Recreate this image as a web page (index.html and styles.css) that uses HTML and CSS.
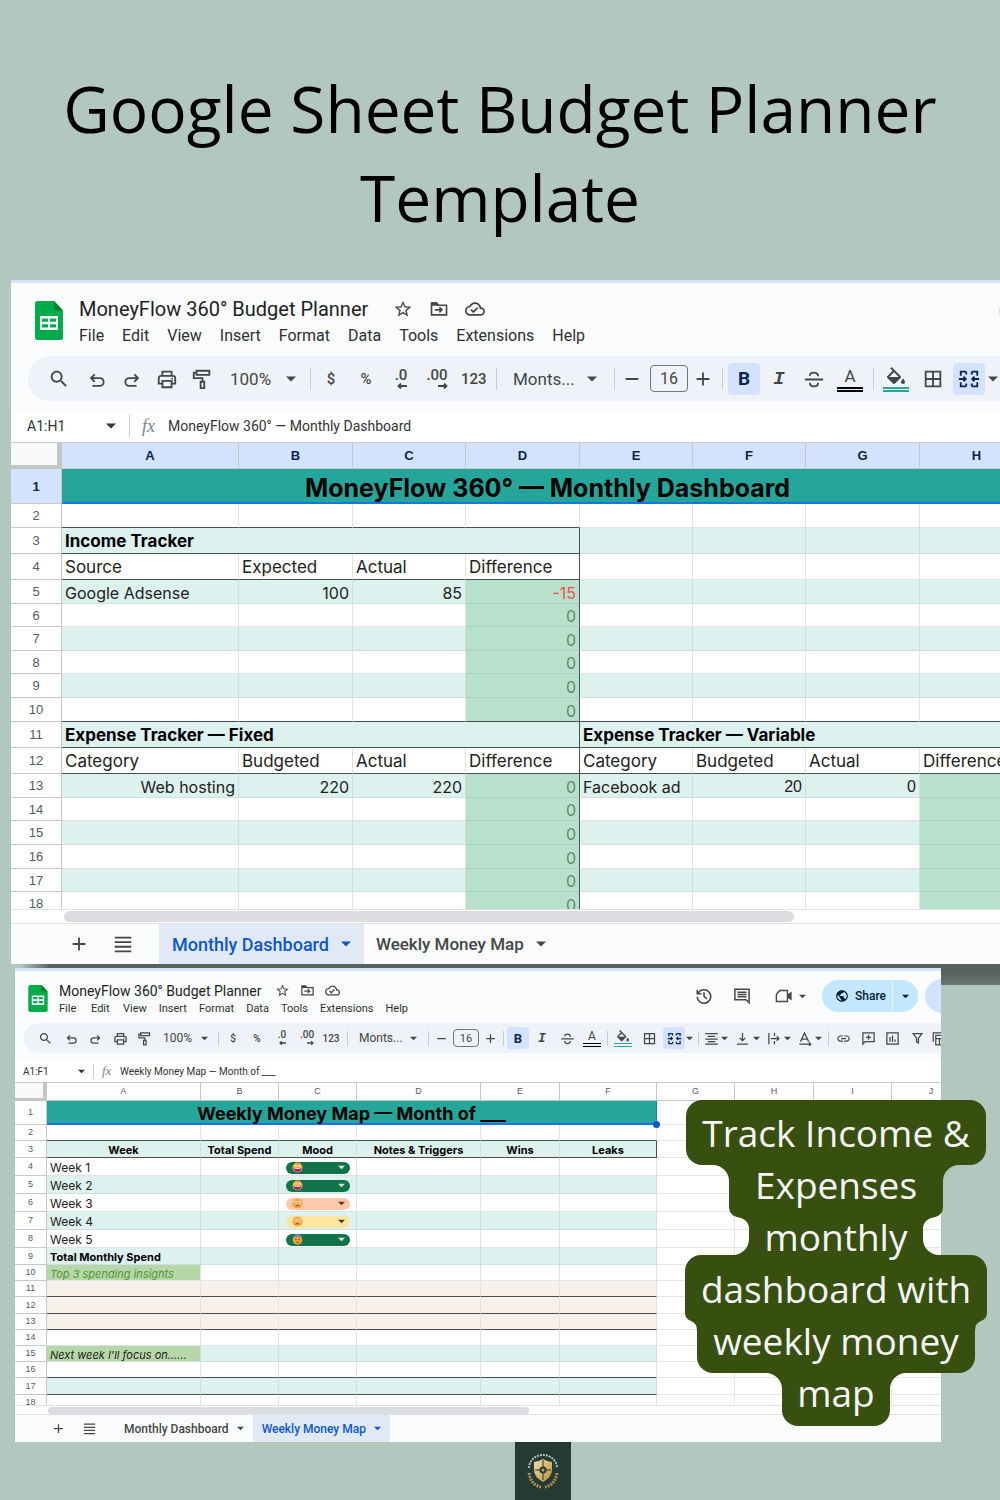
FILE: index.html
```html
<!DOCTYPE html>
<html lang="en">
<head>
<meta charset="utf-8">
<meta name="viewport" content="width=device-width, initial-scale=1">
<title>Google Sheet Budget Planner Template</title>
<link rel="stylesheet" href="styles.css">
</head>
<body>
<svg class="sprite" aria-hidden="true">
  <symbol id="sheets" viewBox="0 0 28 39"><path fill="#00ac47" d="M3 0h16l9 9.500v27a2.500 2.500 0 0 1-2.500 2.500h-23A2.500 2.500 0 0 1 0 36.500V3a3 3 0 0 1 3-3z"/><path fill="#00832d" d="M19 0l9 9.500h-7a2 2 0 0 1-2-2z"/><path fill="#fff" fill-rule="evenodd" d="M5 15h18v14H5zM7 17.500v3.200h6v-3.200zM15 17.500v3.200h6v-3.200zM7 23.200v3.300h6v-3.300zM15 23.200v3.300h6v-3.300z"/></symbol>
  <symbol id="star" viewBox="0 0 24 24"><path d="M22 9.240l-7.190-.62L12 2 9.190 8.630 2 9.240l5.460 4.730L5.820 21 12 17.270 18.180 21l-1.630-7.030L22 9.240zM12 15.400l-3.760 2.270 1-4.280-3.320-2.880 4.380-.38L12 6.100l1.710 4.040 4.380.38-3.320 2.880 1 4.280L12 15.400z"/></symbol>
  <symbol id="move" viewBox="0 0 24 24"><path class="ln" d="M3 5h6l2 2.500h10V19H3zM7 13h8M12.500 10l3 3-3 3"/><path d="M3 4h6l3 3v1H3z"/></symbol>
  <symbol id="cloud" viewBox="0 0 24 24"><path d="M19.350 10.040C18.670 6.590 15.640 4 12 4 9.110 4 6.610 5.640 5.360 8.040 2.350 8.360 0 10.900 0 14c0 3.310 2.690 6 6 6h13c2.760 0 5-2.240 5-5 0-2.640-2.050-4.780-4.650-4.960zM19 18H6c-2.210 0-4-1.790-4-4 0-2.050 1.530-3.760 3.560-3.970l1.070-.11.5-.95C8.080 7.140 9.940 6 12 6c2.620 0 4.880 1.860 5.390 4.430l.3 1.500 1.530.11c1.560.1 2.780 1.410 2.780 2.960 0 1.650-1.350 3-3 3zm-9-3.820l-2.090-2.090L6.500 13.500 10 17l6.010-6.010-1.410-1.410z"/></symbol>
  <symbol id="search" viewBox="0 0 24 24"><path d="M15.500 14h-.79l-.28-.27C15.410 12.590 16 11.110 16 9.500 16 5.910 13.090 3 9.500 3S3 5.910 3 9.500 5.910 16 9.500 16c1.610 0 3.090-.59 4.230-1.570l.27.28v.79l5 4.990L20.490 19l-4.990-5zm-6 0C7.010 14 5 11.990 5 9.500S7.010 5 9.500 5 14 7.010 14 9.500 11.990 14 9.500 14z"/></symbol>
  <symbol id="undo" viewBox="0 0 24 24"><path class="ln" d="M7 19.500h8a4.200 4.200 0 0 0 0-8.500H6M9.500 7l-4 4 4 4"/></symbol>
  <symbol id="redo" viewBox="0 0 24 24"><path class="ln" d="M17 19.500H9a4.200 4.200 0 0 1 0-8.500h9M14.500 7l4 4-4 4"/></symbol>
  <symbol id="print" viewBox="0 0 24 24"><path class="ln" d="M7 8V4h10v4M7 17H3v-6a2.500 2.500 0 0 1 2.500-2.500h13A2.500 2.500 0 0 1 21 11v6h-4M7 14h10v7H7z"/><circle cx="17.700" cy="11.700" r="1"/></symbol>
  <symbol id="paint" viewBox="0 0 24 24"><path class="ln" d="M6 3h14v4.500H6zM6 5H3v6h9.500v4M10.500 15h4v7h-4z"/></symbol>
  <symbol id="caret" viewBox="0 0 10 10"><path d="M0 2.500h10L5 7.500z"/></symbol>
  <symbol id="left" viewBox="0 0 10 6"><path fill="none" stroke="currentColor" stroke-width="1.800" d="M10 3H1.500M4 .5L1.500 3 4 5.500"/></symbol>
  <symbol id="right" viewBox="0 0 10 6"><path fill="none" stroke="currentColor" stroke-width="1.800" d="M0 3h8.500M6 .5L8.500 3 6 5.500"/></symbol>
  <symbol id="minus" viewBox="0 0 24 24"><path d="M5 11h14v2H5z"/></symbol>
  <symbol id="plus" viewBox="0 0 24 24"><path d="M19 13h-6v6h-2v-6H5v-2h6V5h2v6h6z"/></symbol>
  <symbol id="strike" viewBox="0 0 24 24"><path class="ln" d="M2 12.500h20M16.500 9c0-2.300-1.800-4-4.500-4S7.500 6.500 7.500 8.500M7.500 16c0 2.300 1.800 4 4.500 4s4.500-1.700 4.500-4"/></symbol>
  <symbol id="bucket" viewBox="0 0 24 18"><path fill-rule="evenodd" d="M16.560 8.940L7.620 0 6.210 1.410l2.380 2.380-5.150 5.150c-.59.59-.59 1.540 0 2.120l5.500 5.500c.29.29.68.44 1.060.44s.77-.15 1.060-.44l5.500-5.500c.59-.58.59-1.530 0-2.120zM5.210 10L10 5.210 14.790 10zM19 11.500s-2 2.170-2 3.500c0 1.100.9 2 2 2s2-.9 2-2c0-1.330-2-3.500-2-3.500z"/></symbol>
  <symbol id="borders" viewBox="0 0 24 24"><path class="ln" d="M4 4h16v16H4zM12 4v16M4 12h16"/></symbol>
  <symbol id="merge" viewBox="0 0 24 24"><path class="ln" d="M9 4H3v4.500M3 15.500V20h6M15 4h6v4.500M21 15.500V20h-6M1 12h7M6 9.500L8.500 12 6 14.500M23 12h-7M18 9.500L15.500 12l2.500 2.500M9 4v3M9 20v-3M15 4v3M15 20v-3"/></symbol>
  <symbol id="align" viewBox="0 0 24 24"><path d="M2 3h20v2H2zM6 7.500h12v2H6zM2 12h20v2H2zM6 16h12v2H6zM2 20h20v2H2z"/></symbol>
  <symbol id="valign" viewBox="0 0 24 24"><path class="ln" d="M3 21h18M12 3v12M7.500 11l4.500 4.500 4.500-4.500"/></symbol>
  <symbol id="wrap" viewBox="0 0 24 24"><path class="ln" d="M3 3v18M12 3v5M12 16v5M6 12h13M15.500 8.500L19 12l-3.500 3.500"/></symbol>
  <symbol id="rotate" viewBox="0 0 24 24"><path class="ln" d="M4 17L10.500 3 17 17M6.500 13h8M2 21h18M17.500 18l3 3-3 3"/></symbol>
  <symbol id="link" viewBox="0 0 24 24"><path d="M3.900 12c0-1.710 1.390-3.100 3.100-3.100h4V7H7c-2.760 0-5 2.240-5 5s2.240 5 5 5h4v-1.900H7c-1.710 0-3.100-1.390-3.100-3.100zM8 13h8v-2H8v2zm9-6h-4v1.900h4c1.710 0 3.100 1.390 3.100 3.100s-1.390 3.100-3.100 3.100h-4V17h4c2.760 0 5-2.240 5-5s-2.240-5-5-5z"/></symbol>
  <symbol id="addnote" viewBox="0 0 24 24"><path class="ln" d="M3 21V3h18v14H6.500zM12 6v8M8 10h8"/></symbol>
  <symbol id="chart" viewBox="0 0 24 24"><path class="ln" d="M3 3h18v18H3zM8 9.500V17M12 7v10M16 13.500V17"/></symbol>
  <symbol id="filter" viewBox="0 0 24 24"><path class="ln" d="M5 4h14l-5.500 7.500V19l-3-1.500v-6z"/></symbol>
  <symbol id="views" viewBox="0 0 24 24"><path class="ln" d="M2 17V3h18M6 7h18v15H6zM6 12h18M12 12v10M18 12v10"/></symbol>
  <symbol id="history" viewBox="0 0 24 24"><path class="ln" d="M3 3.500V9h5.500M4 8.500A9 9 0 1 1 3 13M12 7v5.500l4 3.500"/></symbol>
  <symbol id="comment" viewBox="0 0 24 24"><path class="ln" d="M2.500 3h19v18l-4-4h-15zM6 7h12M6 10h12M6 13h12"/></symbol>
  <symbol id="video" viewBox="0 0 26 24"><path class="ln" d="M2 9.500L7 4h11v16H2z"/><path d="M18 10l6-4.500v13L18 14z"/></symbol>
  <symbol id="globe" viewBox="0 0 24 24"><path d="M12 2C6.480 2 2 6.480 2 12s4.480 10 10 10 10-4.480 10-10S17.520 2 12 2zm-1 17.930c-3.950-.49-7-3.850-7-7.930 0-.62.08-1.210.21-1.790L9 15v1c0 1.100.9 2 2 2v1.930zm6.900-2.540c-.26-.81-1-1.390-1.900-1.390h-1v-3c0-.55-.45-1-1-1H8v-2h2c.55 0 1-.45 1-1V7h2c1.100 0 2-.9 2-2v-.41c2.930 1.190 5 4.060 5 7.410 0 2.080-.8 3.970-2.100 5.390z"/></symbol>
  <symbol id="menu" viewBox="0 0 24 24"><path d="M3 4h18v2H3zM3 9h18v2H3zM3 14h18v2H3zM3 19h18v2H3z"/></symbol>
  <symbol id="grin" viewBox="0 0 12 12"><circle cx="6" cy="6" r="5.500" fill="#f7a531"/><circle cx="4" cy="4.300" r="1.400" fill="#fff"/><circle cx="8" cy="4.300" r="1.400" fill="#fff"/><circle cx="4.200" cy="4.400" r=".6" fill="#47302a"/><circle cx="7.800" cy="4.400" r=".6" fill="#47302a"/><path fill="#b3127c" d="M2 6.500h8a4 4 0 0 1-8 0z"/><path fill="#fff" d="M3 6.500h6v1H3z"/></symbol>
  <symbol id="frown" viewBox="0 0 12 12"><circle cx="6" cy="6" r="5.500" fill="#f9a83c"/><circle cx="4" cy="4.800" r="1.400" fill="#fff"/><circle cx="8" cy="4.800" r="1.400" fill="#fff"/><circle cx="4.200" cy="5" r=".6" fill="#47302a"/><circle cx="7.800" cy="5" r=".6" fill="#47302a"/><path fill="none" stroke="#6b3320" d="M4 9q2-2 4 0"/></symbol>
  <symbol id="angel" viewBox="0 0 12 12"><circle cx="6" cy="6.500" r="5.200" fill="#f7a531"/><ellipse cx="6" cy="1.800" rx="4.500" ry="1.200" fill="none" stroke="#5b7fe8"/><path fill="none" stroke="#6b3320" d="M3 6q1-1 2 0M7 6q1-1 2 0M4 8.500q2 2 4 0"/></symbol>
</svg>

<main class="page">
  <h1 class="headline">Google Sheet Budget Planner Template</h1>

  <section class="sheet sheet-lg" aria-label="Monthly Dashboard sheet">
    <header class="top">
      <svg class="logo"><use href="#sheets"/></svg>
      <div class="doc">
        <div class="name-row"><h2 class="name">MoneyFlow 360° Budget Planner</h2><svg class="icon"><use href="#star"/></svg><svg class="icon"><use href="#move"/></svg><svg class="icon"><use href="#cloud"/></svg></div>
        <nav class="menus"><a href="#">File</a><a href="#">Edit</a><a href="#">View</a><a href="#">Insert</a><a href="#">Format</a><a href="#">Data</a><a href="#">Tools</a><a href="#">Extensions</a><a href="#">Help</a></nav>
      </div>
      <div class="actions"><svg class="icon"><use href="#history"/></svg></div>
    </header>
    <div class="toolbar">
      <button aria-label="Search the menus"><svg class="icon"><use href="#search"/></svg></button>
      <button aria-label="Undo"><svg class="icon"><use href="#undo"/></svg></button>
      <button aria-label="Redo"><svg class="icon"><use href="#redo"/></svg></button>
      <button aria-label="Print"><svg class="icon"><use href="#print"/></svg></button>
      <button aria-label="Paint format"><svg class="icon"><use href="#paint"/></svg></button>
      <select class="pick" aria-label="Zoom"><option>100%</option></select>
      <svg class="caret"><use href="#caret"/></svg>
      <i class="sep"></i>
      <button class="fmt" aria-label="Currency">$</button>
      <button class="fmt" aria-label="Percent">%</button>
      <button class="fmt dec" aria-label="Fewer decimals">.0<svg class="tiny"><use href="#left"/></svg></button>
      <button class="fmt dec" aria-label="More decimals">.00<svg class="tiny"><use href="#right"/></svg></button>
      <button class="fmt num" aria-label="More formats">123</button>
      <i class="sep"></i>
      <select class="pick" aria-label="Font"><option>Monts...</option></select>
      <svg class="caret"><use href="#caret"/></svg>
      <i class="sep"></i>
      <button aria-label="Smaller"><svg class="icon"><use href="#minus"/></svg></button>
      <input class="size" aria-label="Font size" value="16">
      <button aria-label="Larger"><svg class="icon"><use href="#plus"/></svg></button>
      <i class="sep"></i>
      <button class="on bold" aria-label="Bold">B</button>
      <button class="ital" aria-label="Italic">I</button>
      <button aria-label="Strikethrough"><svg class="icon"><use href="#strike"/></svg></button>
      <button class="ink" aria-label="Text colour">A</button>
      <i class="sep"></i>
      <button class="ink fill" aria-label="Fill colour"><svg class="bucket"><use href="#bucket"/></svg></button>
      <button aria-label="Borders"><svg class="icon"><use href="#borders"/></svg></button>
      <button class="on" aria-label="Merge cells"><svg class="icon"><use href="#merge"/></svg></button>
      <svg class="caret"><use href="#caret"/></svg>
    </div>
    <div class="formula">
      <input class="ref" aria-label="Name box" value="A1:H1"><svg class="caret"><use href="#caret"/></svg><i class="sep"></i><span class="fx">fx</span><input class="expr" aria-label="Formula" value="MoneyFlow 360° — Monthly Dashboard">
    </div>
    <div class="view">
      <table class="grid">
        <colgroup><col class="c51"><col class="c177"><col class="c114"><col class="c113"><col class="c114"><col class="c113"><col class="c113"><col class="c114"><col class="c114"></colgroup>
        <thead><tr><th class="corner"></th><th>A</th><th>B</th><th>C</th><th>D</th><th>E</th><th>F</th><th>G</th><th>H</th></tr></thead>
        <tbody>
        <tr class="banner"><th>1</th><td colspan="8">MoneyFlow 360° — Monthly Dashboard</td></tr>
        <tr class="rule4"><th>2</th><td></td><td></td><td></td><td></td><td></td><td></td><td></td><td></td></tr>
        <tr class="band tall"><th>3</th><td colspan="4" class="strong ub rb">Income Tracker</td><td></td><td></td><td></td><td></td></tr>
        <tr class="tall cap rule4"><th>4</th><td>Source</td><td>Expected</td><td>Actual</td><td class="rb">Difference</td><td></td><td></td><td></td><td></td></tr>
        <tr class="band"><th>5</th><td>Google Adsense</td><td class="n">100</td><td class="n">85</td><td class="diff neg rb">-15</td><td></td><td></td><td></td><td></td></tr>
        <tr class="snug"><th>6</th><td></td><td></td><td></td><td class="diff rb">0</td><td></td><td></td><td></td><td></td></tr>
        <tr class="band"><th>7</th><td></td><td></td><td></td><td class="diff rb">0</td><td></td><td></td><td></td><td></td></tr>
        <tr class="snug"><th>8</th><td></td><td></td><td></td><td class="diff rb">0</td><td></td><td></td><td></td><td></td></tr>
        <tr class="band"><th>9</th><td></td><td></td><td></td><td class="diff rb">0</td><td></td><td></td><td></td><td></td></tr>
        <tr class="rule"><th>10</th><td></td><td></td><td></td><td class="diff rb">0</td><td></td><td></td><td></td><td></td></tr>
        <tr class="band tall rule"><th>11</th><td colspan="4" class="strong rb">Expense Tracker — Fixed</td><td colspan="4" class="strong">Expense Tracker — Variable</td></tr>
        <tr class="tall cap rule"><th>12</th><td>Category</td><td>Budgeted</td><td>Actual</td><td class="rb">Difference</td><td>Category</td><td>Budgeted</td><td>Actual</td><td>Difference</td></tr>
        <tr class="band"><th>13</th><td class="n">Web hosting</td><td class="n">220</td><td class="n">220</td><td class="diff rb">0</td><td>Facebook ad</td><td class="n plain">20</td><td class="n plain">0</td><td class="diff"></td></tr>
        <tr class="snug"><th>14</th><td></td><td></td><td></td><td class="diff rb">0</td><td></td><td></td><td></td><td class="diff"></td></tr>
        <tr class="band"><th>15</th><td></td><td></td><td></td><td class="diff rb">0</td><td></td><td></td><td></td><td class="diff"></td></tr>
        <tr><th>16</th><td></td><td></td><td></td><td class="diff rb">0</td><td></td><td></td><td></td><td class="diff"></td></tr>
        <tr class="band snug"><th>17</th><td></td><td></td><td></td><td class="diff rb">0</td><td></td><td></td><td></td><td class="diff"></td></tr>
        <tr><th>18</th><td></td><td></td><td></td><td class="diff rb">0</td><td></td><td></td><td></td><td class="diff"></td></tr>
        </tbody>
      </table>
    </div>
    <div class="scroll"><i class="thumb"></i></div>
    <footer class="tabs">
      <button aria-label="Add sheet"><svg class="icon"><use href="#plus"/></svg></button>
      <button aria-label="All sheets"><svg class="icon"><use href="#menu"/></svg></button>
      <button class="tab active">Monthly Dashboard<svg class="caret"><use href="#caret"/></svg></button>
      <button class="tab">Weekly Money Map<svg class="caret"><use href="#caret"/></svg></button>
    </footer>
  </section>

  <div class="lower">
  <section class="sheet sheet-sm" aria-label="Weekly Money Map sheet">
    <header class="top">
      <svg class="logo"><use href="#sheets"/></svg>
      <div class="doc">
        <div class="name-row"><h2 class="name">MoneyFlow 360° Budget Planner</h2><svg class="icon"><use href="#star"/></svg><svg class="icon"><use href="#move"/></svg><svg class="icon"><use href="#cloud"/></svg></div>
        <nav class="menus"><a href="#">File</a><a href="#">Edit</a><a href="#">View</a><a href="#">Insert</a><a href="#">Format</a><a href="#">Data</a><a href="#">Tools</a><a href="#">Extensions</a><a href="#">Help</a></nav>
      </div>
      <div class="actions">
        <svg class="icon"><use href="#history"/></svg><svg class="icon"><use href="#comment"/></svg>
        <span class="meet"><svg class="icon"><use href="#video"/></svg><svg class="caret"><use href="#caret"/></svg></span>
        <span class="share"><button><svg class="globe"><use href="#globe"/></svg>Share</button><button aria-label="Share options"><svg class="caret"><use href="#caret"/></svg></button></span>
        <i class="avatar"></i>
      </div>
    </header>
    <div class="toolbar">
      <button aria-label="Search the menus"><svg class="icon"><use href="#search"/></svg></button>
      <button aria-label="Undo"><svg class="icon"><use href="#undo"/></svg></button>
      <button aria-label="Redo"><svg class="icon"><use href="#redo"/></svg></button>
      <button aria-label="Print"><svg class="icon"><use href="#print"/></svg></button>
      <button aria-label="Paint format"><svg class="icon"><use href="#paint"/></svg></button>
      <select class="pick" aria-label="Zoom"><option>100%</option></select>
      <svg class="caret"><use href="#caret"/></svg>
      <i class="sep"></i>
      <button class="fmt" aria-label="Currency">$</button>
      <button class="fmt" aria-label="Percent">%</button>
      <button class="fmt dec" aria-label="Fewer decimals">.0<svg class="tiny"><use href="#left"/></svg></button>
      <button class="fmt dec" aria-label="More decimals">.00<svg class="tiny"><use href="#right"/></svg></button>
      <button class="fmt num" aria-label="More formats">123</button>
      <i class="sep"></i>
      <select class="pick" aria-label="Font"><option>Monts...</option></select>
      <svg class="caret"><use href="#caret"/></svg>
      <i class="sep"></i>
      <button aria-label="Smaller"><svg class="icon"><use href="#minus"/></svg></button>
      <input class="size" aria-label="Font size" value="16">
      <button aria-label="Larger"><svg class="icon"><use href="#plus"/></svg></button>
      <i class="sep"></i>
      <button class="on bold" aria-label="Bold">B</button>
      <button class="ital" aria-label="Italic">I</button>
      <button aria-label="Strikethrough"><svg class="icon"><use href="#strike"/></svg></button>
      <button class="ink" aria-label="Text colour">A</button>
      <i class="sep"></i>
      <button class="ink fill" aria-label="Fill colour"><svg class="bucket"><use href="#bucket"/></svg></button>
      <button aria-label="Borders"><svg class="icon"><use href="#borders"/></svg></button>
      <button class="on" aria-label="Merge cells"><svg class="icon"><use href="#merge"/></svg></button>
      <svg class="caret"><use href="#caret"/></svg>
      <i class="sep"></i>
      <button aria-label="Horizontal align"><svg class="icon"><use href="#align"/></svg></button>
      <svg class="caret"><use href="#caret"/></svg>
      <button aria-label="Vertical align"><svg class="icon"><use href="#valign"/></svg></button>
      <svg class="caret"><use href="#caret"/></svg>
      <button aria-label="Text wrapping"><svg class="icon"><use href="#wrap"/></svg></button>
      <svg class="caret"><use href="#caret"/></svg>
      <button aria-label="Text rotation"><svg class="icon"><use href="#rotate"/></svg></button>
      <svg class="caret"><use href="#caret"/></svg>
      <i class="sep"></i>
      <button aria-label="Insert link"><svg class="icon"><use href="#link"/></svg></button>
      <button aria-label="Insert comment"><svg class="icon"><use href="#addnote"/></svg></button>
      <button aria-label="Insert chart"><svg class="icon"><use href="#chart"/></svg></button>
      <button aria-label="Filter"><svg class="icon"><use href="#filter"/></svg></button>
      <button aria-label="Table views"><svg class="icon"><use href="#views"/></svg></button>
    </div>
    <div class="formula">
      <input class="ref" aria-label="Name box" value="A1:F1"><svg class="caret"><use href="#caret"/></svg><i class="sep"></i><span class="fx">fx</span><input class="expr" aria-label="Formula" value="Weekly Money Map — Month of ___">
    </div>
    <div class="view">
      <table class="grid">
        <colgroup><col class="c32"><col class="c154"><col class="c78"><col class="c78"><col class="c124"><col class="c79"><col class="c97"><col class="c78"><col class="c79"><col class="c78"><col class="c79"></colgroup>
        <thead><tr><th class="corner"></th><th>A</th><th>B</th><th>C</th><th>D</th><th>E</th><th>F</th><th>G</th><th>H</th><th>I</th><th>J</th></tr></thead>
        <tbody>
        <tr class="banner"><th>1</th><td colspan="6">Weekly Money Map — Month of ___<i class="handle"></i></td><td></td><td></td><td></td><td></td></tr>
        <tr class="rule6"><th>2</th><td></td><td></td><td></td><td></td><td></td><td></td><td></td><td></td><td></td><td></td></tr>
        <tr class="band heads rule6"><th>3</th><td>Week</td><td>Total Spend</td><td>Mood</td><td>Notes &amp; Triggers</td><td>Wins</td><td class="rb">Leaks</td><td></td><td></td><td></td><td></td></tr>
        <tr class="week"><th>4</th><td>Week 1</td><td></td><td><span class="chip"><svg><use href="#grin"/></svg><select aria-label="Mood, week 1"><option></option></select><svg class="caret"><use href="#caret"/></svg></span></td><td></td><td></td><td></td><td></td><td></td><td></td><td></td></tr>
        <tr class="band week"><th>5</th><td>Week 2</td><td></td><td><span class="chip"><svg><use href="#grin"/></svg><select aria-label="Mood, week 2"><option></option></select><svg class="caret"><use href="#caret"/></svg></span></td><td></td><td></td><td></td><td></td><td></td><td></td><td></td></tr>
        <tr class="week"><th>6</th><td>Week 3</td><td></td><td><span class="chip peach"><svg><use href="#frown"/></svg><select aria-label="Mood, week 3"><option></option></select><svg class="caret"><use href="#caret"/></svg></span></td><td></td><td></td><td></td><td></td><td></td><td></td><td></td></tr>
        <tr class="band week"><th>7</th><td>Week 4</td><td></td><td><span class="chip yellow"><svg><use href="#frown"/></svg><select aria-label="Mood, week 4"><option></option></select><svg class="caret"><use href="#caret"/></svg></span></td><td></td><td></td><td></td><td></td><td></td><td></td><td></td></tr>
        <tr class="week"><th>8</th><td>Week 5</td><td></td><td><span class="chip"><svg><use href="#angel"/></svg><select aria-label="Mood, week 5"><option></option></select><svg class="caret"><use href="#caret"/></svg></span></td><td></td><td></td><td></td><td></td><td></td><td></td><td></td></tr>
        <tr class="band roomy"><th>9</th><td class="strong">Total Monthly Spend</td><td></td><td></td><td></td><td></td><td></td><td></td><td></td><td></td><td></td></tr>
        <tr><th>10</th><td class="prompt soft">Top 3 spending insights</td><td></td><td></td><td></td><td></td><td></td><td></td><td></td><td></td><td></td></tr>
        <tr class="blush rule6"><th>11</th><td></td><td></td><td></td><td></td><td></td><td></td><td></td><td></td><td></td><td></td></tr>
        <tr class="blush rule6 roomy"><th>12</th><td></td><td></td><td></td><td></td><td></td><td></td><td></td><td></td><td></td><td></td></tr>
        <tr class="blush rule6"><th>13</th><td></td><td></td><td></td><td></td><td></td><td></td><td></td><td></td><td></td><td></td></tr>
        <tr><th>14</th><td></td><td></td><td></td><td></td><td></td><td></td><td></td><td></td><td></td><td></td></tr>
        <tr class="band"><th>15</th><td class="prompt">Next week I'll focus on......</td><td></td><td></td><td></td><td></td><td></td><td></td><td></td><td></td><td></td></tr>
        <tr class="rule6"><th>16</th><td></td><td></td><td></td><td></td><td></td><td></td><td></td><td></td><td></td><td></td></tr>
        <tr class="band rule6 roomy"><th>17</th><td></td><td></td><td></td><td></td><td></td><td></td><td></td><td></td><td></td><td></td></tr>
        <tr><th>18</th><td></td><td></td><td></td><td></td><td></td><td></td><td></td><td></td><td></td><td></td></tr>
        </tbody>
      </table>
    </div>
    <div class="scroll"><i class="thumb"></i></div>
    <footer class="tabs">
      <button aria-label="Add sheet"><svg class="icon"><use href="#plus"/></svg></button>
      <button aria-label="All sheets"><svg class="icon"><use href="#menu"/></svg></button>
      <button class="tab">Monthly Dashboard<svg class="caret"><use href="#caret"/></svg></button>
      <button class="tab active">Weekly Money Map<svg class="caret"><use href="#caret"/></svg></button>
    </footer>
  </section>
  <aside class="callout">
    <svg class="blob" viewBox="0 0 302 326" aria-hidden="true"><path fill="#375010" d="M17 0H285a16 16 0 0 1 16 16V49a16 16 0 0 1-16 16H274a16 16 0 0 0-16 16V107a10 10 0 0 1-8 10q-12 2-12 12V139a16 16 0 0 0 16 16H286a16 16 0 0 1 16 16V212a9 9 0 0 1-6 9q-6 2-6 10V257a16 16 0 0 1-16 16H221a16 16 0 0 0-16 16V310a16 16 0 0 1-16 16H113a16 16 0 0 1-16-16V289a16 16 0 0 0-16-16H28a16 16 0 0 1-16-16V231q0-8-6-10a9 9 0 0 1-6-9V171a16 16 0 0 1 16-16H48a16 16 0 0 0 16-16V129q0-10-12-12a10 10 0 0 1-8-10V81a16 16 0 0 0-16-16H17a16 16 0 0 1-16-16V16a16 16 0 0 1 16-16z"/></svg>
    <p>Track Income &amp;<br>Expenses<br>monthly<br>dashboard with<br>weekly money<br>map</p>
  </aside>
  </div>

  <footer class="brand">
    <svg viewBox="0 0 56 58" role="img" aria-label="Brand crest">
      <defs><linearGradient id="gold" x1="0" y1="0" x2="1" y2="1"><stop offset="0" stop-color="#f3e0a0"/><stop offset="1" stop-color="#b98d3f"/></linearGradient></defs>
      <path fill="url(#gold)" d="M28 17q5 3 9 3v8q0 7-9 12-9-5-9-12v-8q4 0 9-3z"/>
      <path stroke="#233a35" fill="none" d="M28 18v20M20 28h16"/><circle cx="28" cy="28" r="3.500" fill="#233a35"/><circle cx="28" cy="28" r="1.500" fill="#c9a55a"/>
      <path fill="none" stroke="#d9e0d8" stroke-width="2" stroke-dasharray="2 1" opacity=".8" d="M14 26a14 13 0 0 1 28 0"/>
      <path fill="none" stroke="#b08f4e" stroke-width="3" stroke-dasharray="2 1" d="M14 31q2 12 12 14M42 31q-2 12-12 14"/>
    </svg>
  </footer>
</main>
</body>
</html>
```
FILE: styles.css
```css
* { box-sizing: border-box; }

body {
  margin: 0;
  background: #b2c7be;
  font-family: Roboto, "Liberation Sans", sans-serif;
  color: #444746;
}

.sprite { display: none; }
.page { overflow: hidden; }

button, input, select {
  appearance: none;
  margin: 0;
  padding: 0;
  border: 0;
  background: none;
  font: inherit;
  color: inherit;
}

svg { display: block; flex: none; fill: currentColor; }
.ln { fill: none; stroke: currentColor; stroke-width: 2; }

.headline {
  max-width: 900px;
  margin: 0 auto;
  padding: 64px 0 38px;
  font: 400 64px/89px "Open Sans", "Noto Sans", sans-serif;
  color: #000;
  text-align: center;
}

/* Spreadsheet window */
.sheet {
  border-top: 3px solid #d3e3fd;
  background: #f9fbfd;
}

.top, .name-row, .menus, .actions, .formula, .tabs, .tab, .meet, .share, .share button {
  display: flex;
  align-items: center;
}

.top { align-items: flex-start; }
.name { margin: 0; font-weight: 400; color: #1f1f1f; }
.menus a { color: #30312f; text-decoration: none; }
.actions { margin-left: auto; }

.toolbar {
  display: grid;
  align-items: center;
  background: #eff2f8;
  overflow: hidden;
}

.toolbar button {
  display: grid;
  place-items: center;
  width: var(--cell);
  height: var(--key);
}

.icon { width: var(--icon); height: var(--icon); }
.caret { width: var(--caret); height: var(--caret); }
.sep { width: 1px; height: var(--icon); background: #c9ccd1; }
.toolbar .on { width: var(--key); background: #d3e3fd; border-radius: 4px; color: #0b2452; }
.toolbar .bold { font-weight: 700; font-size: var(--glyph); }
.toolbar .ital { font: italic 700 var(--glyph) "Liberation Mono", monospace; }
.toolbar .ink {
  height: var(--ink);
  width: var(--wide);
  border-bottom: 5px double #000;
  font-size: var(--label);
  line-height: 1;
}
.toolbar .fill { border-color: #26a69a; }
.fmt { font-weight: 500; font-size: var(--small); white-space: nowrap; }
.toolbar .dec { place-content: center; line-height: 1; }
.tiny { width: var(--caret); height: 6px; justify-self: end; }
.pick { font-size: var(--label); }
.size { border: 1px solid #747775; border-radius: 4px; text-align: center; }

.formula { background: #fff; color: #333; }
.expr { flex: 1; }
.fx { font: italic 400 18px "Liberation Serif", serif; color: #80868b; }

.view { overflow: hidden; background: #fff; }

.grid {
  table-layout: fixed;
  width: 0;
  border-spacing: 0;
  font-family: Inter, "Open Sans", sans-serif;
  color: #222;
}

.grid th, .grid td {
  padding: 0 3px;
  border-right: 1px solid #e1e3e3;
  border-bottom: 1px solid #e1e3e3;
  white-space: nowrap;
  overflow: hidden;
  line-height: 1;
  text-align: left;
  font-weight: 400;
}

.grid td { padding-top: 2px; }

.grid th {
  border-color: #c7c9c9;
  text-align: center;
  font-family: "Liberation Sans", Arial, sans-serif;
  color: #575b5f;
}

.grid thead th { border-top: 1px solid #c7c9c9; }
.grid .corner { background: #f8f9fa; }
.grid .band td { background: #ddf1ee; border-color: #cde0dd; }
.grid .banner td { background: #26a69a; color: #000; font-weight: 700; text-align: center; border-bottom: 2px solid #1a73e8; }
.grid .strong { font-weight: 700; color: #000; }
.grid .n { text-align: right; }
.grid .plain { font-family: "Liberation Sans", Arial, sans-serif; }
.grid td.diff { background: #b7e1cd; border-bottom-color: #a8d0bd; text-align: right; color: #5d8c67; }
.grid td.neg { color: #ee5145; }
.grid td.rb { border-right-color: #4a4f4e; }
.grid td.ub, .grid .rule td { border-bottom-color: #4a4f4e; }
.grid .rule4 td:nth-child(-n+5), .grid .rule6 td:nth-child(-n+7) { border-bottom-color: #4a4f4e; }

.scroll { background: #fff; border-top: 1px solid #e1e3e3; border-bottom: 1px solid #e1e3e3; }
.thumb { display: block; background: #dadce0; border-radius: 6px; }
.tab { height: 100%; font-weight: 500; }
.tab.active { background: #e1e9f7; color: #0b57d0; }

/* Large window */
.sheet-lg {
  --icon: 22px; --cell: 24px; --key: 32px; --caret: 10px; --wide: 26px; --ink: 26px;
  --glyph: 19px; --label: 17px; --small: 15px;
  margin-left: 11px;
}
.sheet-lg .top { height: 73px; padding: 18px 0 0 24px; }
.sheet-lg .logo { width: 28px; height: 39px; }
.sheet-lg .doc { padding-left: 16px; }
.sheet-lg .name-row { gap: 14px; height: 16px; }
.sheet-lg .name { font-size: 20px; line-height: 24px; padding-right: 10px; }
.sheet-lg .name-row .icon { width: 22px; height: 20px; }
.sheet-lg .menus { gap: 18px; padding-top: 9px; font-size: 16px; line-height: 20px; }
.sheet-lg .actions { margin-right: -20px; padding-top: 4px; }
.sheet-lg .toolbar {
  grid-template-columns: 38px 35px 35px 35px 40px 56px 24px 9px 35px 35px 36px 36px 35px 17px 74px 27px 6px 30px 41px 31px 6px 39px 35px 35px 36px 10px 38px 32px 35px 10px;
  height: 45px;
  margin-left: 17px;
  padding-left: 19px;
  border-radius: 23px 0 0 23px;
}
.sheet-lg .size { width: 38px; height: 27px; font-size: 16px; }
.sheet-lg .bucket { width: 24px; height: 18px; }
.sheet-lg .formula { height: 32px; margin-top: 9px; padding-left: 16px; font-size: 14px; }
.sheet-lg .ref { width: 79px; }
.sheet-lg .formula .sep { margin: 0 12px 0 13px; }
.sheet-lg .fx { width: 26px; }
.sheet-lg .view { height: 467px; }
.sheet-lg .grid { font-size: 16px; }
.sheet-lg .grid tr { height: 24px; }
.sheet-lg .grid thead tr { height: 27px; }
.sheet-lg .grid .banner { height: 35px; }
.sheet-lg .grid .tall { height: 26px; }
.sheet-lg .grid .snug { height: 23px; }
.sheet-lg .grid th { font-size: 13px; }
.sheet-lg .grid thead th, .sheet-lg .banner th { background: #d3e3fd; color: #0b2452; font-weight: 700; }
.sheet-lg .grid .corner { background: #f8f9fa; border-right: 5px solid #c4c6c6; border-bottom: 4px solid #c4c6c6; }
.sheet-lg .grid .banner td { font-size: 25px; padding-top: 6px; }
.sheet-lg .cap td, .sheet-lg .grid .strong { font-size: 17px; }
.sheet-lg .scroll { height: 15px; padding: 1px 0 0 53px; }
.sheet-lg .thumb { width: 730px; height: 11px; }
.sheet-lg .tabs { height: 40px; padding-left: 57px; gap: 22px; }
.sheet-lg .tab { gap: 12px; padding: 0 13px; font-size: 17px; }
.sheet-lg .tab.active { margin: 0 -23px 0 3px; font-size: 18px; }

.c51 { width: 51px; } .c177 { width: 177px; } .c113 { width: 113px; } .c114 { width: 114px; }

/* Small window, with the large window's shade falling behind it */
.lower {
  position: relative;
  padding: 4px 59px 0 15px;
  background: linear-gradient(to right, #b2c7be 20px, #b2c7be00 50px) 0 0 / 100% 21px no-repeat,
    linear-gradient(#57625d 0, #57625d 8px, #6b7871 21px) 0 0 / 100% 21px no-repeat;
}
.sheet-sm {
  --icon: 15px; --cell: 18px; --key: 22px; --caret: 7px; --wide: 18px; --ink: 18px;
  --glyph: 13px; --label: 12px; --small: 10px;
}
.sheet-sm .top { height: 52px; padding: 14px 0 0 13px; overflow: hidden; }
.sheet-sm .logo { width: 20px; height: 27px; }
.sheet-sm .doc { padding-left: 11px; }
.sheet-sm .name-row { gap: 10px; height: 11px; }
.sheet-sm .name { font-size: 14px; line-height: 16px; padding-right: 4px; }
.sheet-sm .menus { gap: 12px; padding-top: 6px; font-size: 11px; line-height: 14px; }
.sheet-sm .menus a { min-width: 20px; }
.sheet-sm .actions { margin: -6px -18px 0 auto; }
.sheet-sm .actions .icon { width: 18px; height: 18px; margin-right: 20px; }
.sheet-sm .meet .icon { margin-right: 6px; }
.meet { margin: 0 16px 0 4px; }
.share { height: 32px; border-radius: 16px; background: #c2e7ff; color: #001d35; overflow: hidden; margin-right: 7px; }
.share button { height: 32px; gap: 6px; padding: 0 6px 0 13px; font-size: 12px; font-weight: 500; }
.share button + button { padding: 0 9px; border-left: 1px solid #e4f3fd; }
.globe { width: 14px; height: 14px; }
.avatar { width: 34px; height: 34px; border-radius: 17px; background: #d3e3fd; }
.sheet-sm .toolbar {
  grid-template-columns: 26px 24px 25px 24px 28px 38px 17px 6px 24px 25px 25px 24px 25px 12px 51px 18px 4px 21px 28px 22px 4px 26px 25px 25px 24px 7px 26px 23px 23px 12px 4px 19px 12px 20px 12px 19px 12px 19px 13px 6px 25px 24px 25px 22px 18px;
  height: 30px;
  margin-left: 9px;
  padding-left: 12px;
  border-radius: 15px 0 0 15px;
}
.sheet-sm .size { width: 26px; height: 18px; font-size: 11px; }
.sheet-sm .bucket { width: 16px; height: 12px; }
.sheet-sm .ink { border-bottom-width: 4px; }
.sheet-sm .formula { height: 22px; margin-top: 7px; padding-left: 8px; font-size: 10px; }
.sheet-sm .formula .sep { margin: 0 8px; }
.sheet-sm .ref { width: 55px; }
.sheet-sm .fx { width: 18px; font-size: 13px; }
.sheet-sm .view { height: 323px; }
.sheet-sm .grid { font-size: 12px; }
.sheet-sm .grid tr { height: 16px; }
.sheet-sm .grid thead tr { height: 19px; }
.sheet-sm .grid .banner { height: 24px; }
.sheet-sm .grid .heads { height: 17px; }
.sheet-sm .grid .week { height: 18px; }
.sheet-sm .grid .roomy { height: 17px; }
.sheet-sm .grid th { font-size: 9px; padding: 0; }
.sheet-sm .grid .corner { border-right: 4px solid #c4c6c6; border-bottom: 3px solid #c4c6c6; }
.sheet-sm .grid td { line-height: 12px; }
.sheet-sm .grid td:nth-child(n+8) { background: #fff; border-color: #e6e8e8; }
.sheet-sm .grid .banner td:not([colspan]) { background: #fff; border-bottom: 1px solid #e6e8e8; }
.sheet-sm .grid .banner td[colspan] { position: relative; overflow: visible; padding-top: 4px; font-size: 18px; border-right: 1px solid #1a73e8; }
.handle { position: absolute; right: -4px; bottom: -5px; width: 7px; height: 7px; border-radius: 4px; background: #0b57d0; z-index: 1; }
.sheet-sm .heads td { font-size: 11px; font-weight: 700; text-align: center; color: #000; }
.sheet-sm .grid .strong { font-size: 11px; }
.sheet-sm .grid .prompt { background: #b6d7a8; font-size: 11px; font-style: italic; }
.sheet-sm .grid .soft { color: #559238; }
.sheet-sm .grid .blush td:nth-child(-n+7) { background: #f8f0ea; border-right-color: #e8e1dc; }
.chip { display: flex; align-items: center; width: 64px; height: 12px; margin-left: 4px; padding: 0 5px 0 6px; border-radius: 6px; background: #11734b; color: #d4edbc; }
.chip select { flex: 1; min-width: 0; height: 12px; }
.chip svg { width: 11px; height: 11px; }
.chip .caret { width: 7px; height: 7px; }
.peach { background: #ffc8aa; color: #753800; }
.yellow { background: #ffe5a0; color: #473821; }
.sheet-sm .scroll { height: 10px; padding: 1px 0 0 33px; }
.sheet-sm .thumb { width: 481px; height: 7px; }
.sheet-sm .tabs { height: 27px; padding-left: 36px; gap: 16px; font-size: 12px; }
.sheet-sm .tab { gap: 8px; margin-left: 2px; padding: 0 9px; }
.sheet-sm .tab.active { margin-left: -16px; }

.c32 { width: 32px; } .c154 { width: 154px; } .c78 { width: 78px; } .c79 { width: 79px; } .c124 { width: 124px; } .c97 { width: 97px; }

/* Caption laid over the lower window */
.callout { position: absolute; top: 136px; right: 13px; width: 302px; height: 326px; }
.blob { position: absolute; top: 0; left: 0; width: 302px; height: 326px; }
.callout p {
  position: relative;
  margin: 0;
  padding-top: 7px;
  font: 400 37px/52px "Open Sans", "Noto Sans", sans-serif;
  color: #f5f5f5;
  text-align: center;
  white-space: nowrap;
}

.brand { display: flex; justify-content: center; padding-left: 86px; }
.brand svg { width: 56px; height: 58px; background: #233a35; }
```
